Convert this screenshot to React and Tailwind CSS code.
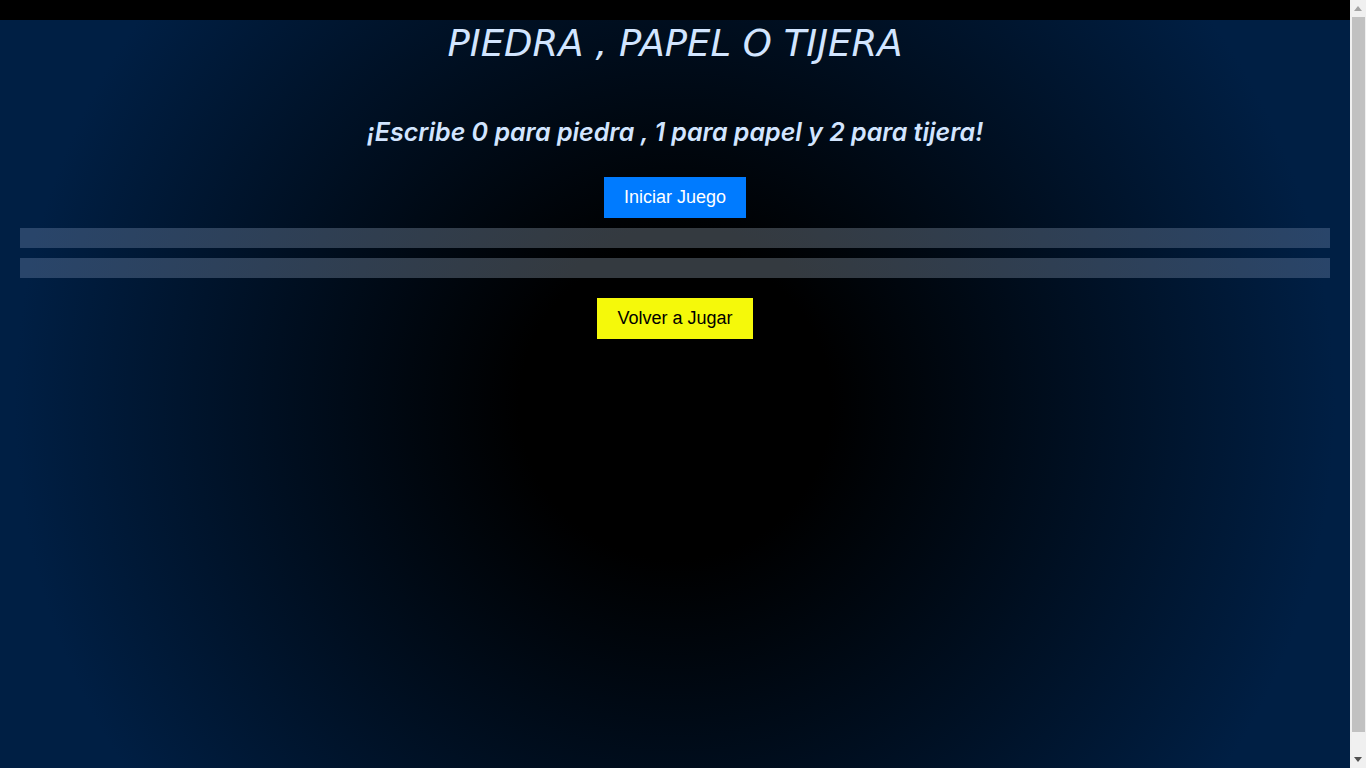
function Scrollbar() {
  return (
    <div className="flex w-4 shrink-0 flex-col items-center bg-[#f0f0f0]">
      <div className="flex h-[17px] w-full items-center justify-center">
        <svg width="8" height="5" viewBox="0 0 8 5"><path d="M4 0L8 5H0z" fill="#a3a3a3" /></svg>
      </div>
      <div className="h-[715px] w-[13px] bg-[#c1c1c1]" />
      <div className="flex-1" />
      <div className="flex h-[17px] w-full items-center justify-center">
        <svg width="8" height="5" viewBox="0 0 8 5"><path d="M0 0H8L4 5z" fill="#505050" /></svg>
      </div>
    </div>
  );
}

export default function App() {
  return (
    <div className="flex h-screen overflow-hidden">
      <div className="flex-1 overflow-hidden bg-black pt-5">
        <div className="flex h-screen flex-col items-center bg-[radial-gradient(circle,#000_20%,#001f44_85%)] px-5">
          <h1 className="mt-[2px] text-[37px] leading-[44px] font-normal italic text-[#d2e5ff] [font-family:'DejaVu_Sans',sans-serif]">
            PIEDRA , PAPEL O TIJERA
          </h1>
          <h2 className="mt-[50px] text-[25px] leading-[32px] font-semibold italic text-[#d2e5ff] [font-family:Inter,sans-serif]">
            ¡Escribe 0 para piedra , 1 para papel y 2 para tijera!
          </h2>
          <button className="mt-[29px] bg-[#007bff] px-5 py-2.5 text-lg leading-[21px] text-white [font-family:'Liberation_Sans',Arial,sans-serif]">
            Iniciar Juego
          </button>
          <div className="mt-2.5 h-5 w-full bg-[radial-gradient(circle,#343a40_20%,#29456a_85%)] bg-fixed" />
          <div className="mt-2.5 h-5 w-full bg-[radial-gradient(circle,#343a40_20%,#29456a_85%)] bg-fixed" />
          <button className="mt-5 bg-[#f5f90a] px-5 py-2.5 text-lg leading-[21px] text-black [font-family:'Liberation_Sans',Arial,sans-serif]">
            Volver a Jugar
          </button>
        </div>
      </div>
      <Scrollbar />
    </div>
  );
}
